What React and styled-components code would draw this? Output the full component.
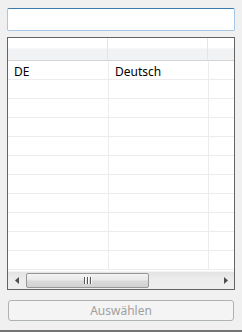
import React from "react"
import styled, { createGlobalStyle } from "styled-components"

const GlobalStyle = createGlobalStyle`
  html, body {
    margin: 0;
    padding: 0;
    background: #f0f0f0;
  }
  body {
    font-family: "Segoe UI", "Noto Sans", "Open Sans", sans-serif;
    font-size: 12px;
  }
`

const COLUMNS = [101, 100, 40]
const ROW_COUNT = 11
const rows = [["DE", "Deutsch", ""]]

const App = () => {
  const filled = [...rows]
  while (filled.length < ROW_COUNT) filled.push(["", "", ""])

  return (
    <>
      <GlobalStyle />
      <Window>
        <SearchInput type="text" />
        <ListView>
          <Viewport>
            <HeaderRow>
              {COLUMNS.map((w, i) => (
                <HeaderCell key={i} $width={i === 0 ? w - 1 : w} />
              ))}
            </HeaderRow>
            {filled.map((row, r) => (
              <DataRow key={r}>
                {COLUMNS.map((w, i) => (
                  <DataCell key={i} $width={w}>
                    {row[i]}
                  </DataCell>
                ))}
              </DataRow>
            ))}
          </Viewport>
          <HScrollBar>
            <Arrow>
              <svg width="4" height="7" viewBox="0 0 4 7">
                <path d="M4 0 L0 3.5 L4 7 Z" fill="#4d4d4d" />
              </svg>
            </Arrow>
            <Track>
              <Thumb>
                <Grip>
                  <span />
                  <span />
                  <span />
                </Grip>
              </Thumb>
            </Track>
            <Arrow>
              <svg width="4" height="7" viewBox="0 0 4 7">
                <path d="M0 0 L4 3.5 L0 7 Z" fill="#4d4d4d" />
              </svg>
            </Arrow>
          </HScrollBar>
        </ListView>
        <ActionButton disabled>Auswählen</ActionButton>
      </Window>
    </>
  )
}

const Window = styled.div`
  box-sizing: border-box;
  width: 242px;
  height: 332px;
  padding: 8px 7px 0;
  display: flex;
  flex-direction: column;
  border-bottom: 2px solid #747474;
`

const SearchInput = styled.input`
  box-sizing: border-box;
  width: 228px;
  height: 23px;
  margin: 0;
  padding: 0 4px;
  background: #fff;
  border: 1px solid #a6c8e7;
  border-top-color: #3d7bad;
  border-radius: 2px;
  outline: none;
  font: inherit;
`

const ListView = styled.div`
  box-sizing: border-box;
  margin-top: 6px;
  width: 228px;
  height: 253px;
  border: 1px solid #646464;
  background: #fff;
  display: flex;
  flex-direction: column;
  overflow: hidden;
`

const Viewport = styled.div`
  flex: 1;
  overflow: hidden;
  min-height: 0;
`

const HeaderRow = styled.div`
  display: flex;
  height: 22px;
  border-bottom: 1px solid #d5d5d5;
  background: linear-gradient(
    to bottom,
    #ffffff 0%,
    #ffffff 45%,
    #f1f2f4 50%,
    #f1f2f4 100%
  );
`

const HeaderCell = styled.div`
  box-sizing: border-box;
  flex: 0 0 ${(p) => p.$width}px;
  border-right: 1px solid #e4e5e7;
`

const DataRow = styled.div`
  display: flex;
  height: 19px;
  box-sizing: border-box;
  border-bottom: 1px solid #ececec;
  &:first-of-type {
    height: 20px;
  }
`

const DataCell = styled.div`
  box-sizing: border-box;
  flex: 0 0 ${(p) => p.$width}px;
  padding: 2px 0 0 6px;
  border-right: 1px solid #ececec;
  color: #000;
  line-height: 18px;
  white-space: nowrap;
`

const HScrollBar = styled.div`
  flex: 0 0 17px;
  display: flex;
  align-items: center;
  background: linear-gradient(to bottom, #e3e3e3, #ececec 40%, #eeeeee);
  border-top: 1px solid #f4f4f4;
`

const Arrow = styled.div`
  flex: 0 0 17px;
  height: 17px;
  display: flex;
  align-items: center;
  justify-content: center;
`

const Track = styled.div`
  flex: 1;
  height: 17px;
  display: flex;
  align-items: center;
  padding-left: 1px;
`

const Thumb = styled.div`
  box-sizing: border-box;
  width: 123px;
  height: 15px;
  border: 1px solid #979797;
  border-radius: 2px;
  background: linear-gradient(
    to bottom,
    #f3f3f3 0%,
    #e9e9e9 45%,
    #d9d9d9 55%,
    #d2d2d2 100%
  );
  display: flex;
  align-items: center;
  justify-content: center;
`

const Grip = styled.div`
  display: flex;
  gap: 2px;
  span {
    display: block;
    width: 1px;
    height: 7px;
    background: #555;
    box-shadow: 1px 0 0 #fff;
  }
`

const ActionButton = styled.button`
  box-sizing: border-box;
  margin: 10px 1px 0;
  width: 226px;
  height: 21px;
  padding: 0;
  border: 1px solid #adb2b5;
  border-radius: 3px;
  background: #f4f4f4;
  color: #a0a0a0;
  font: inherit;
  font-size: 12px;
`

export default App
